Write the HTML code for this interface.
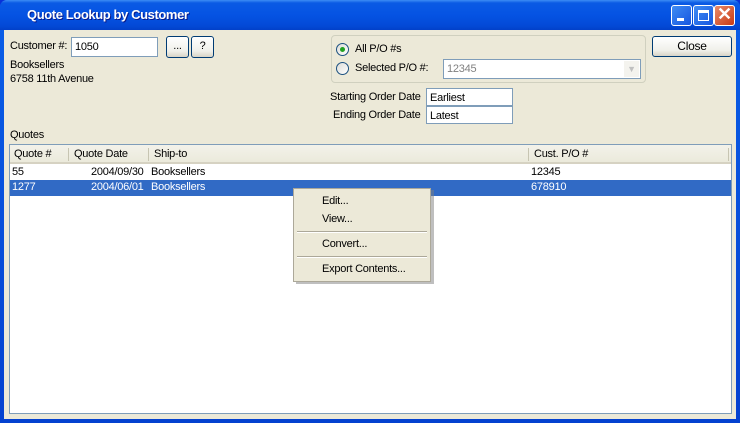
<!DOCTYPE html>
<html><head><style>
*{margin:0;padding:0;box-sizing:border-box}
body{width:740px;height:423px;overflow:hidden;font-family:"Liberation Sans",sans-serif;font-size:11px;letter-spacing:-0.25px;color:#000;background:#0831d9}
.a{position:absolute;white-space:nowrap}
#win{position:absolute;left:0;top:0;width:740px;height:423px;background:linear-gradient(#0a5fe8,#0441d0);border-radius:7px 7px 0 0}
#title{position:absolute;left:0;top:0;width:740px;height:30px;border-radius:7px 7px 0 0;background:linear-gradient(#3d8cf5 0,#0a5ae4 3px,#0553e3 15px,#0349d6 26px,#0240c8 30px)}
#client{position:absolute;left:4px;top:30px;width:732px;height:389px;background:#ece9d8}
.tb{position:absolute;top:5px;width:21px;height:21px;border:1px solid #fff;border-radius:3px;background:linear-gradient(135deg,#3f8cf3,#1656e0)}
.in{position:absolute;background:#fff;border:1px solid #7f9db9;padding:2px 3px;height:20px;line-height:14px}
.btn{position:absolute;border:1px solid #003c74;border-radius:3px;background:linear-gradient(#fff,#f0f0ea 70%,#d8d4c6);text-align:center}
.radio{position:absolute;width:13px;height:13px;border:1px solid #1c5180;border-radius:50%;background:linear-gradient(135deg,#dcdcd7,#fff)}
</style></head><body>
<div id="win"></div>
<div id="title"></div>
<div class="a" style="left:27px;top:7px;color:#fff;font-weight:bold;font-size:13px;letter-spacing:-0.4px;text-shadow:1px 1px #0a1a8a">Quote Lookup by Customer</div>
<div class="tb" style="left:671px"><div style="position:absolute;left:5px;top:12px;width:7px;height:3px;background:#fff"></div></div>
<div class="tb" style="left:693px"><div style="position:absolute;left:4px;top:4px;width:11px;height:11px;border:1px solid #fff;border-top-width:3px"></div></div>
<div class="tb" style="left:714px;background:linear-gradient(135deg,#e88a6a,#c83a14)"><div style="position:absolute;left:2px;top:-2px;color:#fff;font-size:18px;font-weight:bold">✕</div></div>
<div id="client"></div>

<div class="a" style="left:10px;top:40px">Customer #:</div>
<div class="in" style="left:71px;top:37px;width:87px">1050</div>
<div class="btn" style="left:166px;top:36px;width:23px;height:22px;line-height:19px">...</div>
<div class="btn" style="left:191px;top:36px;width:23px;height:22px;line-height:19px">?</div>
<div class="a" style="left:10px;top:59px">Booksellers</div>
<div class="a" style="left:10px;top:73px">6758 11th Avenue</div>

<div class="a" style="left:331px;top:35px;width:315px;height:48px;border:1px solid #d0d0bf;border-radius:4px"></div>
<div class="radio" style="left:336px;top:43px"><div style="position:absolute;left:3px;top:3px;width:5px;height:5px;border-radius:50%;background:#21a121"></div></div>
<div class="a" style="left:355px;top:43px">All P/O #s</div>
<div class="radio" style="left:336px;top:62px"></div>
<div class="a" style="left:355px;top:62px">Selected P/O #:</div>
<div class="in" style="left:443px;top:59px;width:198px;color:#808080">12345<div style="position:absolute;right:1px;top:1px;width:15px;height:16px;background:#f4f3ee;color:#c0c0c0;font-size:9px;text-align:center;line-height:16px">▼</div></div>

<div class="btn" style="left:652px;top:36px;width:80px;height:21px;line-height:18px;font-size:12px">Close</div>

<div class="a" style="left:330px;top:91px">Starting Order Date</div>
<div class="in" style="left:426px;top:88px;width:87px;height:18px">Earliest</div>
<div class="a" style="left:333px;top:109px">Ending Order Date</div>
<div class="in" style="left:426px;top:106px;width:87px;height:18px">Latest</div>

<div class="a" style="left:10px;top:129px">Quotes</div>
<div class="a" style="left:9px;top:144px;width:723px;height:270px;border:1px solid #7f9db9;background:#fff"></div>
<div class="a" style="left:10px;top:145px;width:721px;height:19px;background:linear-gradient(#f3f2ea,#ebeadb);border-bottom:2px solid #d6d2c2"></div>
<div class="a" style="left:68px;top:148px;width:1px;height:13px;background:#c7c5b2"></div>
<div class="a" style="left:148px;top:148px;width:1px;height:13px;background:#c7c5b2"></div>
<div class="a" style="left:528px;top:148px;width:1px;height:13px;background:#c7c5b2"></div>
<div class="a" style="left:728px;top:148px;width:1px;height:13px;background:#c7c5b2"></div>
<div class="a" style="left:14px;top:148px">Quote #</div>
<div class="a" style="left:74px;top:148px">Quote Date</div>
<div class="a" style="left:154px;top:148px">Ship-to</div>
<div class="a" style="left:534px;top:148px">Cust. P/O #</div>
<div class="a" style="left:12px;top:166px">55</div>
<div class="a" style="left:91px;top:166px">2004/09/30</div>
<div class="a" style="left:151px;top:166px">Booksellers</div>
<div class="a" style="left:531px;top:166px">12345</div>
<div class="a" style="left:10px;top:180px;width:721px;height:16px;background:#316ac5"></div>
<div class="a" style="left:12px;top:181px;color:#fff">1277</div>
<div class="a" style="left:91px;top:181px;color:#fff">2004/06/01</div>
<div class="a" style="left:151px;top:181px;color:#fff">Booksellers</div>
<div class="a" style="left:531px;top:181px;color:#fff">678910</div>

<div class="a" style="left:296px;top:190px;width:138px;height:94px;background:#808080;opacity:.5"></div>
<div class="a" style="left:293px;top:188px;width:138px;height:94px;background:#ece9d8;border:1px solid #aca899"></div>
<div class="a" style="left:322px;top:195px">Edit...</div>
<div class="a" style="left:322px;top:213px">View...</div>
<div class="a" style="left:297px;top:231px;width:130px;height:2px;border-top:1px solid #aca899;border-bottom:1px solid #fff"></div>
<div class="a" style="left:322px;top:238px">Convert...</div>
<div class="a" style="left:297px;top:256px;width:130px;height:2px;border-top:1px solid #aca899;border-bottom:1px solid #fff"></div>
<div class="a" style="left:322px;top:263px">Export Contents...</div>
</body></html>
